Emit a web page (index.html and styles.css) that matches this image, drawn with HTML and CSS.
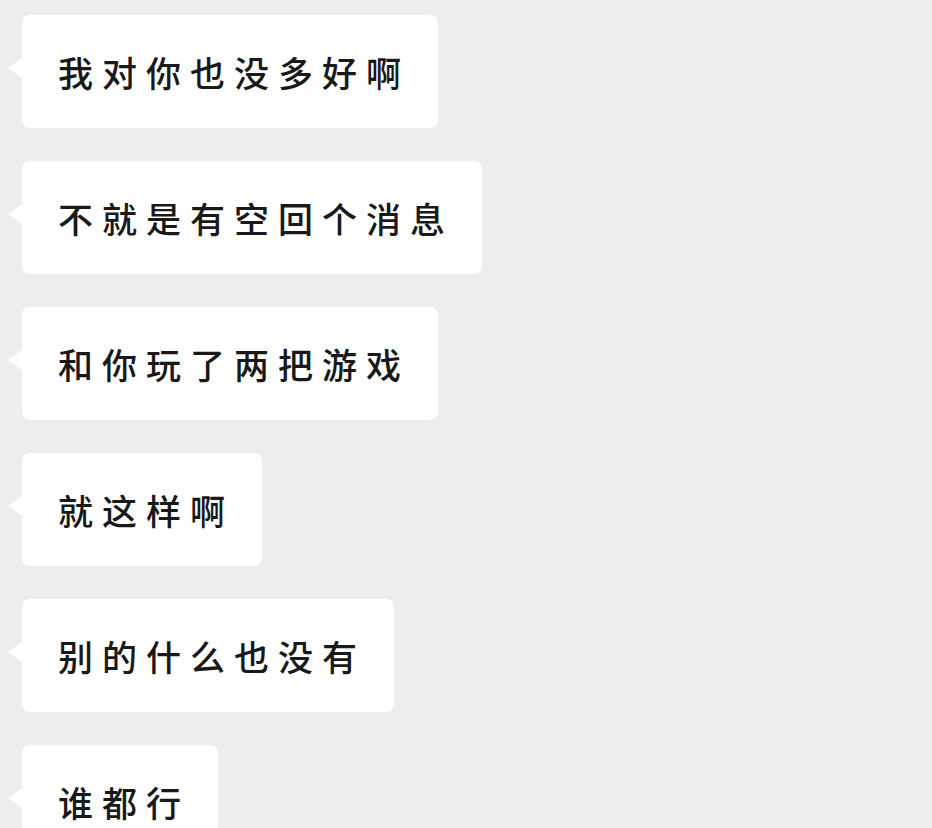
FILE: index.html
```html
<!DOCTYPE html>
<html lang="zh-CN">
<head>
    <meta charset="UTF-8">
    <meta name="viewport" content="width=device-width, initial-scale=1.0">
    <title>聊天</title>
    <link rel="stylesheet" href="styles.css">
</head>
<body>

<div class="chat">
    <div class="bubble">我对你也没多好啊</div>
    <div class="bubble">不就是有空回个消息</div>
    <div class="bubble">和你玩了两把游戏</div>
    <div class="bubble">就这样啊</div>
    <div class="bubble">别的什么也没有</div>
    <div class="bubble">谁都行</div>
</div>

</body>
</html>
```

FILE: styles.css
```css
:root {
    --background-color: #ededed;
    --bubble-color: #ffffff;
    --text-color: #191919;
}
body {
    margin: 0;
    background-color: var(--background-color);
    color: var(--text-color);
    font-family: "Noto Sans CJK SC", "Noto Sans", sans-serif;
    overflow: hidden;
}
.chat {
    display: flex;
    flex-direction: column;
    align-items: flex-start;
    gap: 33px;
    padding: 15px 0 0 22px;
}
.bubble {
    position: relative;
    background-color: var(--bubble-color);
    border-radius: 8px;
    padding: 34px 28px 34px 36px;
    font-size: 35px;
    font-weight: 500;
    line-height: 45px;
    letter-spacing: 9px;
    white-space: nowrap;
}
/* la colita del globo */
.bubble::before {
    content: "";
    position: absolute;
    left: -14px;
    top: 43px;
    width: 0;
    height: 0;
    border-top: 10px solid transparent;
    border-bottom: 10px solid transparent;
    border-right: 14px solid var(--bubble-color);
}
```
